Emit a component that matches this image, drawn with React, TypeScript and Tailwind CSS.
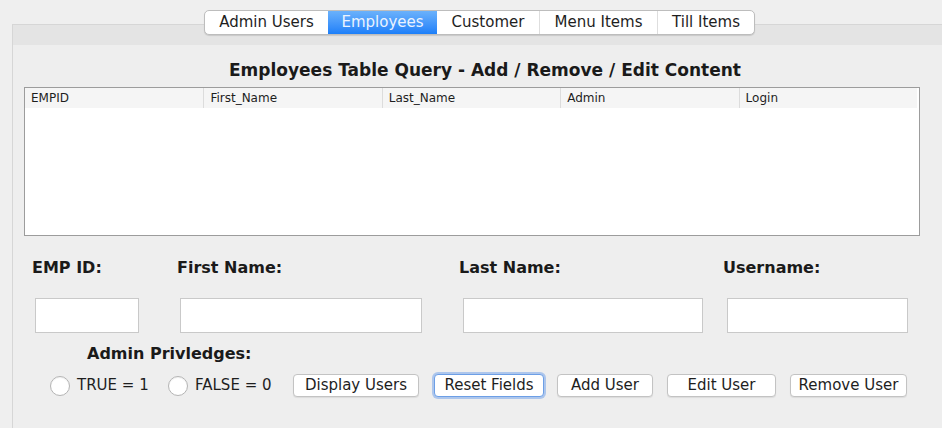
const tabs = [
  { label: "Admin Users", w: "w-[123px]" },
  { label: "Employees", w: "w-[109px]", active: true },
  { label: "Customer", w: "w-[102px]" },
  { label: "Menu Items", w: "w-[118px]" },
  { label: "Till Items", w: "w-[97px]" },
];

const columns = ["EMPID", "First_Name", "Last_Name", "Admin", "Login"];

const fields = [
  { label: "EMP ID:", col: "ml-[19px] w-[107px]", input: "ml-[3px] w-[104px]" },
  { label: "First Name:", col: "ml-[38px] w-[245px]", input: "ml-[3px] w-[242px]" },
  { label: "Last Name:", col: "ml-[37px] w-[244px]", input: "ml-[4px] w-[240px]" },
  { label: "Username:", col: "ml-[20px] w-[185px]", input: "ml-[4px] w-[181px]" },
];

function Radio({ label, className, textWidth }: { label: string; className: string; textWidth: string }) {
  return (
    <div className={`flex shrink-0 items-center ${className}`}>
      <span className="h-[20px] w-[20px] shrink-0 rounded-full border border-[#b4b4b4] bg-white shadow-[inset_0_1px_1px_rgba(0,0,0,0.06)]" />
      <span className={`ml-[7px] shrink-0 whitespace-nowrap ${textWidth} text-[15px] text-[#1e1e1e]`}>{label}</span>
    </div>
  );
}

function Button({ label, className, focused }: { label: string; className: string; focused?: boolean }) {
  return (
    <button
      className={`flex h-[23px] shrink-0 items-center justify-center whitespace-nowrap rounded-[4px] bg-white text-[15px] text-[#1e1e1e] ${
        focused
          ? "border border-[#6d9fe6] shadow-[0_0_0_2px_rgba(120,165,235,0.55)]"
          : "border border-[#c3c3c3] shadow-[0_1px_1px_rgba(0,0,0,0.08)]"
      } ${className}`}
    >
      {label}
    </button>
  );
}

export default function App() {
  return (
    <div
      className="h-[428px] w-[942px] overflow-hidden bg-[#efefef] text-[#1e1e1e]"
      style={{ fontFamily: '"DejaVu Sans", "Liberation Sans", sans-serif' }}
    >
      {/* tab strip */}
      <div className="relative z-10 ml-[204px] flex pt-[10px]">
        <div className="flex h-[25px] overflow-hidden rounded-[5px] border border-[#bdbdbd] bg-white shadow-[0_1px_1px_rgba(0,0,0,0.12)]">
          {tabs.map((t, i) => (
            <div
              key={t.label}
              className={`flex items-center justify-center whitespace-nowrap text-[15px] ${t.w} ${
                t.active
                  ? "bg-gradient-to-b from-[#6ab1fb] to-[#1b7ff9] text-[#eaf3ff]"
                  : "text-[#1e1e1e]"
              } ${i > 0 && !t.active && !tabs[i - 1].active ? "border-l border-[#dedede]" : ""}`}
            >
              {t.label}
            </div>
          ))}
        </div>
      </div>

      {/* tab pane */}
      <div className="-mt-[11px] ml-[12px] h-[420px] border-l border-t border-[#d6d6d6] bg-[#eeeeee]">
        <div className="h-[20px] bg-[#e4e4e4]" />

        <h1 className="mt-[15px] h-[20px] whitespace-nowrap pl-[216px] text-[17px] font-bold leading-[20px] text-[#1a1a1a]">
          Employees Table Query - Add / Remove / Edit Content
        </h1>

        {/* table */}
        <div className="ml-[11px] mt-[7px] h-[149px] w-[896px] border border-[#9c9c9c] bg-white">
          <div className="mr-[2px] flex h-[20px] bg-[#f5f5f5]">
            {columns.map((c, i) => (
              <div
                key={c}
                className={`flex w-[179px] items-center text-[12px] text-[#1e1e1e] ${
                  i === 0 ? "pl-[6px]" : "border-l border-[#dcdcdc] pl-[6px]"
                }`}
              >
                {c}
              </div>
            ))}
          </div>
        </div>

        {/* fields */}
        <div className="mt-[22px] flex">
          {fields.map((f) => (
            <div key={f.label} className={`flex shrink-0 flex-col ${f.col}`}>
              <div className="h-[20px] whitespace-nowrap text-[16px] font-bold leading-[20px] text-[#1a1a1a]">{f.label}</div>
              <div className={`mt-[20px] h-[35px] border border-[#c9c9c9] bg-white ${f.input}`} />
            </div>
          ))}
        </div>

        <div className="ml-[74px] mt-[11px] h-[20px] text-[16px] font-bold leading-[20px] text-[#1a1a1a]">
          Admin Privledges:
        </div>

        {/* controls */}
        <div className="mt-[10px] flex h-[23px] items-center">
          <Radio label="TRUE = 1" className="ml-[37px]" textWidth="w-[70px]" />
          <Radio label="FALSE = 0" className="ml-[21px]" textWidth="w-[76px]" />
          <Button label="Display Users" className="ml-[22px] w-[126px]" />
          <Button label="Reset Fields" className="ml-[15px] w-[110px]" focused />
          <Button label="Add User" className="ml-[13px] w-[96px]" />
          <Button label="Edit User" className="ml-[14px] w-[109px]" />
          <Button label="Remove User" className="ml-[14px] w-[117px]" />
        </div>
      </div>
    </div>
  );
}
